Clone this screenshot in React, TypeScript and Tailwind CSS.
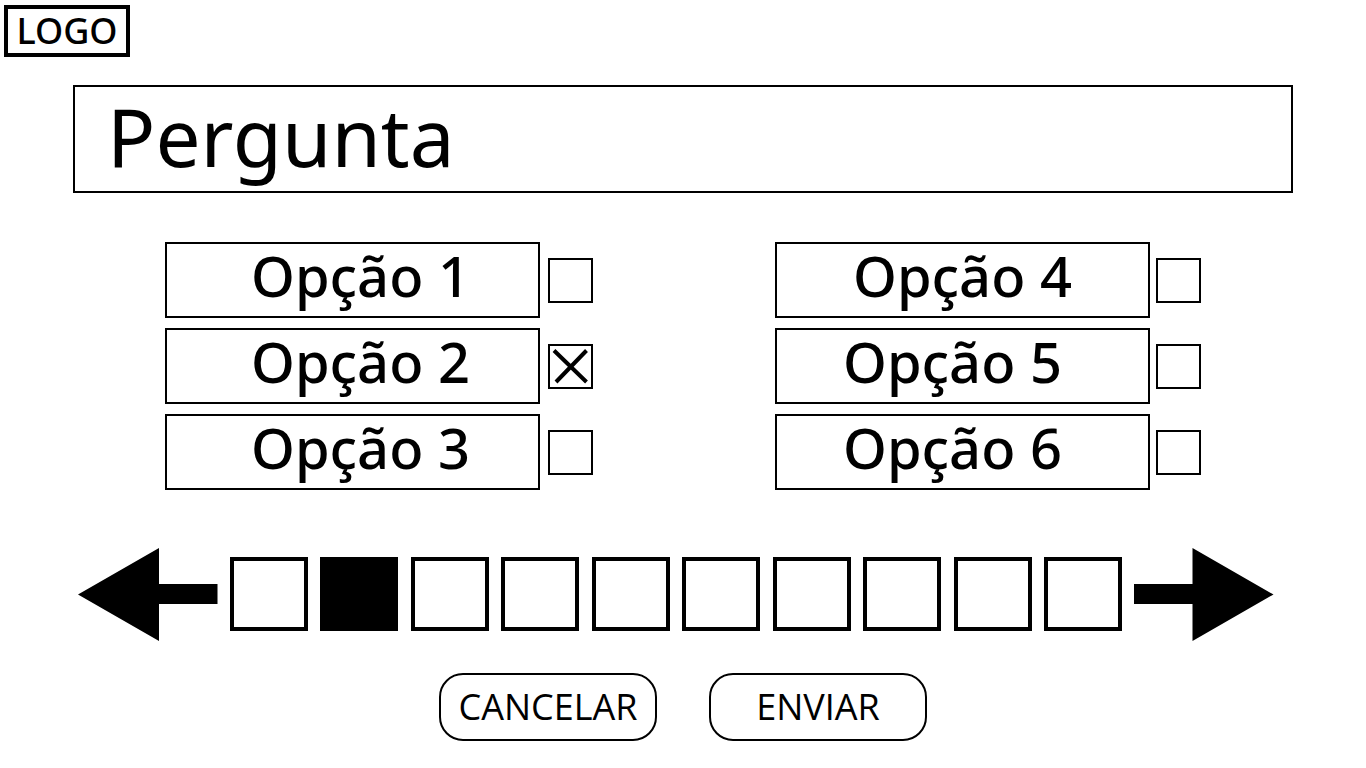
import { useState } from "react";

type Option = { id: number; align: string };

const leftOptions: Option[] = [
  { id: 1, align: "pl-4" },
  { id: 2, align: "pl-4" },
  { id: 3, align: "pl-4" },
];

const rightOptions: Option[] = [
  { id: 4, align: "" },
  { id: 5, align: "pr-5" },
  { id: 6, align: "pr-5" },
];

const PAGE_COUNT = 10;

function OptionRow({
  option,
  gap,
  checked,
  onToggle,
}: {
  option: Option;
  gap: string;
  checked: boolean;
  onToggle: () => void;
}) {
  const inputId = `opcao-${option.id}`;
  return (
    <li className={`flex items-center ${gap}`}>
      <label
        htmlFor={inputId}
        className={`flex h-[76px] w-[375px] items-center justify-center border-2 border-black pb-2.5 text-[56px] leading-none font-medium whitespace-nowrap ${option.align}`}
      >
        Opção {option.id}
      </label>
      <span className="relative flex size-[45px] shrink-0">
        <input
          id={inputId}
          type="checkbox"
          checked={checked}
          onChange={onToggle}
          className="size-full appearance-none border-2 border-black bg-white"
        />
        {checked && (
          <svg
            viewBox="0 0 45 45"
            className="pointer-events-none absolute inset-0 size-full"
            fill="none"
            stroke="black"
            strokeWidth="4"
            aria-hidden="true"
          >
            <path d="M6 6.500 38.500 38M38.500 6.500 8 38" />
          </svg>
        )}
      </span>
    </li>
  );
}

function OptionColumn({
  options,
  gap,
  selected,
  onToggle,
}: {
  options: Option[];
  gap: string;
  selected: number[];
  onToggle: (id: number) => void;
}) {
  return (
    <ul className="flex flex-col gap-[10px]">
      {options.map((option) => (
        <OptionRow
          key={option.id}
          option={option}
          gap={gap}
          checked={selected.includes(option.id)}
          onToggle={() => onToggle(option.id)}
        />
      ))}
    </ul>
  );
}

export default function App() {
  const [selected, setSelected] = useState<number[]>([2]);
  const [page, setPage] = useState(1);

  const toggle = (id: number) =>
    setSelected((ids) =>
      ids.includes(id) ? ids.filter((other) => other !== id) : [...ids, id],
    );

  return (
    <div className="min-h-screen bg-white pt-[5px] pb-6 font-['Noto_Sans',sans-serif] text-black">
      <header className="flex px-1">
        <div className="flex h-[52px] w-[126px] items-center justify-center border-4 border-black text-4xl leading-none font-medium">
          LOGO
        </div>
      </header>

      <main>
        <h1 className="mx-[73px] mt-7 flex h-[108px] items-center border-2 border-black pb-1.5 pl-8 text-[80px] leading-none">
          Pergunta
        </h1>

        <div className="mt-[49px] flex justify-between px-[165px]">
          <OptionColumn options={leftOptions} gap="gap-2" selected={selected} onToggle={toggle} />
          <OptionColumn options={rightOptions} gap="gap-[6px]" selected={selected} onToggle={toggle} />
        </div>

        <nav
          aria-label="Perguntas"
          className="mt-[57px] flex items-center justify-between gap-3 pr-[92px] pl-[78px]"
        >
          <button
            type="button"
            aria-label="Anterior"
            onClick={() => setPage((p) => Math.max(0, p - 1))}
            className="shrink-0"
          >
            <svg viewBox="0 0 140 94" className="h-[94px] w-[140px]" aria-hidden="true">
              <path d="M0 47.500 81 1V37H139.500V57H81V94Z" />
            </svg>
          </button>
          <div className="flex flex-1 justify-between">
            {Array.from({ length: PAGE_COUNT }, (_, i) => (
              <button
                key={i}
                type="button"
                aria-label={`Pergunta ${i + 1}`}
                aria-current={i === page ? "page" : undefined}
                onClick={() => setPage(i)}
                className={`h-[74px] w-[78px] border-4 border-black ${i === page ? "bg-black" : "bg-white"}`}
              />
            ))}
          </div>
          <button
            type="button"
            aria-label="Próxima"
            onClick={() => setPage((p) => Math.min(PAGE_COUNT - 1, p + 1))}
            className="shrink-0"
          >
            <svg viewBox="0 0 140 94" className="h-[94px] w-[140px]" aria-hidden="true">
              <path d="M139.500 47.500 58.500 1V37H0V57H58.500V94Z" />
            </svg>
          </button>
        </nav>

        <div className="mt-8 flex justify-center gap-[52px] font-['Open_Sans',sans-serif] text-4xl">
          <button
            type="button"
            className="flex h-[68px] w-[218px] items-center justify-center rounded-3xl border-2 border-black leading-none"
          >
            CANCELAR
          </button>
          <button
            type="button"
            className="flex h-[68px] w-[218px] items-center justify-center rounded-3xl border-2 border-black leading-none"
          >
            ENVIAR
          </button>
        </div>
      </main>
    </div>
  );
}
